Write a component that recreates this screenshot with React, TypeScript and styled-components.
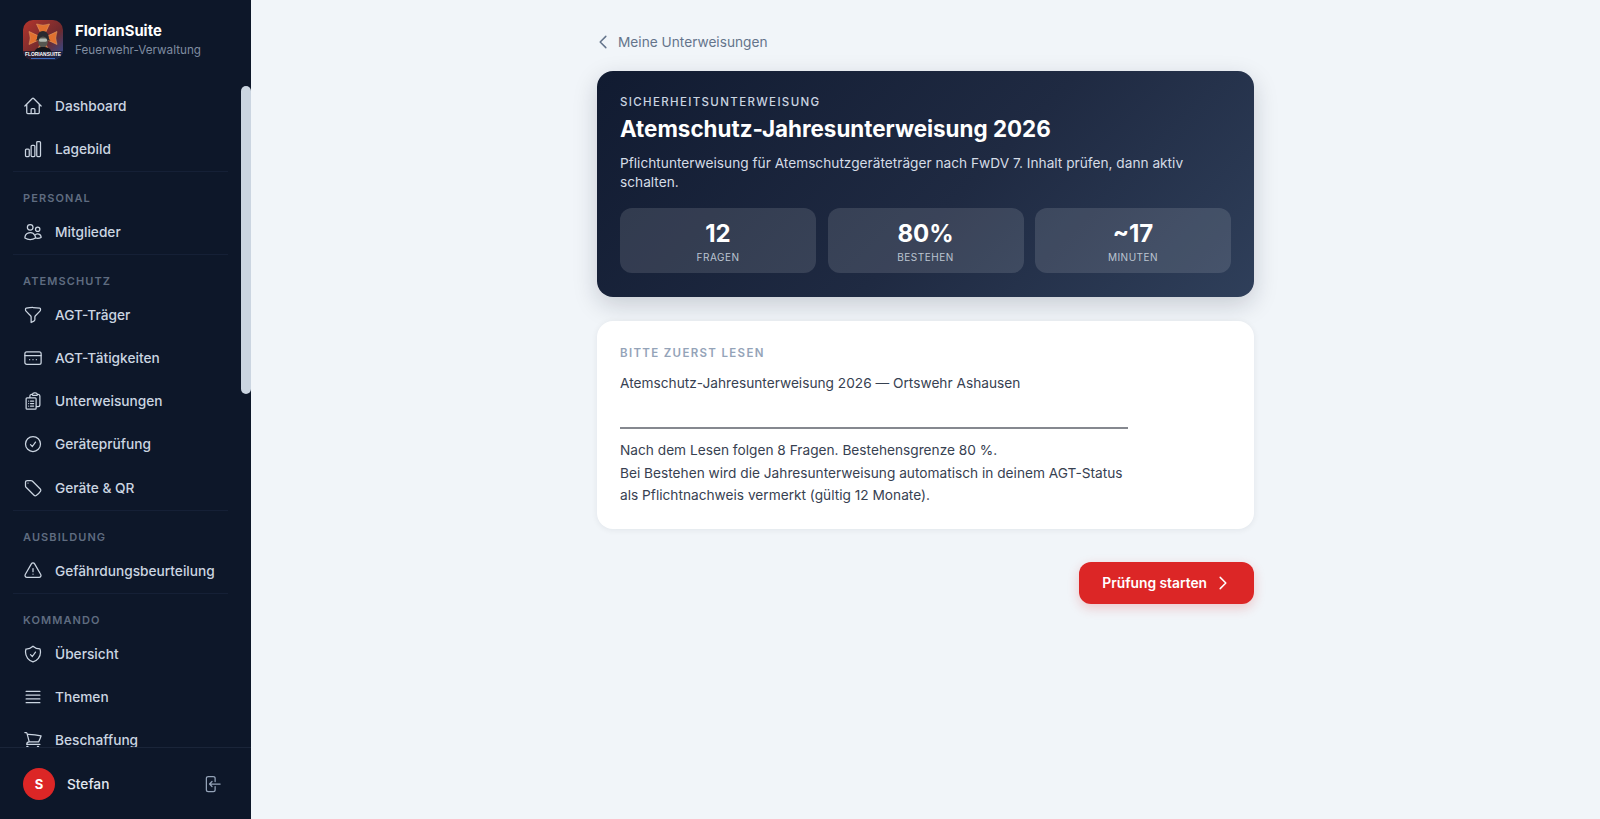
import React from "react";
import styled, { createGlobalStyle } from "styled-components";
import {
  HiOutlineArrowLeftEndOnRectangle,
  HiOutlineBars4,
  HiOutlineChartBar,
  HiOutlineCheckCircle,
  HiOutlineChevronLeft,
  HiOutlineChevronRight,
  HiOutlineClipboardDocumentList,
  HiOutlineExclamationTriangle,
  HiOutlineFunnel,
  HiOutlineHome,
  HiOutlineShieldCheck,
  HiOutlineShoppingCart,
  HiOutlineTag,
  HiOutlineUsers,
} from "react-icons/hi2";

const GlobalStyle = createGlobalStyle`
  html, body, #root {
    margin: 0;
    height: 100%;
  }
  body {
    font-family: Inter, "Noto Sans", "Liberation Sans", sans-serif;
    background: #f1f5f9;
    overflow: hidden;
  }
  * {
    box-sizing: border-box;
  }
`;

const Shell = styled.div`
  display: flex;
  height: 100vh;
`;

const Sidebar = styled.aside`
  position: relative;
  width: 251px;
  flex-shrink: 0;
  display: flex;
  flex-direction: column;
  background: #0d1729;
`;

const Brand = styled.div`
  display: flex;
  align-items: center;
  gap: 12px;
  height: 80px;
  padding: 0 23px 1px;
  flex-shrink: 0;
`;

const BrandText = styled.div`
  display: flex;
  flex-direction: column;
  gap: 2px;
`;

const BrandName = styled.div`
  font-size: 14.8px;
  font-weight: 700;
  line-height: 19px;
  color: #ffffff;
`;

const BrandSub = styled.div`
  font-size: 11.7px;
  line-height: 15px;
  color: #7f8ca0;
`;

const Nav = styled.nav`
  flex: 1;
  min-height: 0;
  overflow: hidden;
  padding: 5px 23px 0 13px;
`;

const ScrollThumb = styled.div`
  position: absolute;
  top: 86px;
  right: 0;
  width: 10px;
  height: 308px;
  border-radius: 5px;
  background: #cbd5e1;
`;

const Group = styled.div`
  border-bottom: 1px solid #152036;
  margin-bottom: 19px;
`;

const GroupLabel = styled.div`
  padding-left: 10px;
  margin-bottom: 6px;
  font-size: 11px;
  line-height: 14px;
  font-weight: 600;
  letter-spacing: 1.1px;
  text-transform: uppercase;
  color: #5f6c80;
`;

const NavItem = styled.a`
  display: flex;
  align-items: center;
  gap: 12px;
  height: 41.15px;
  margin-bottom: 2px;
  padding-left: 10px;
  font-size: 13.7px;
  font-weight: 500;
  color: #cbd5e1;

  svg {
    flex-shrink: 0;
    font-size: 20px;
  }
`;

const SidebarFooter = styled.div`
  height: 72px;
  flex-shrink: 0;
  display: flex;
  align-items: center;
  padding: 0 29px 0 23px;
  gap: 12px;
  border-top: 1px solid #1a2539;
`;

const Avatar = styled.div`
  width: 32px;
  height: 32px;
  border-radius: 50%;
  background: #dc2626;
  color: #ffffff;
  display: flex;
  align-items: center;
  justify-content: center;
  font-size: 13px;
  font-weight: 700;
`;

const UserName = styled.div`
  flex: 1;
  font-size: 13.7px;
  font-weight: 500;
  color: #e2e8f0;
`;

const LogoutIcon = styled(HiOutlineArrowLeftEndOnRectangle)`
  font-size: 20px;
  color: #94a3b8;
`;

const Main = styled.main`
  flex: 1;
  min-width: 0;
  display: flex;
  justify-content: center;
  padding-top: 31px;
`;

const Column = styled.div`
  width: 657px;
  display: flex;
  flex-direction: column;
`;

const BackLink = styled.a`
  display: flex;
  align-items: center;
  gap: 6px;
  height: 22px;
  margin-bottom: 18px;
  font-size: 13.7px;
  color: #64748b;

  svg {
    margin-left: -3px;
    font-size: 18px;
    stroke-width: 2;
  }
`;

const Hero = styled.section`
  height: 226px;
  padding: 23px 23px 0;
  border-radius: 16px;
  background: linear-gradient(135deg, #111b31 0%, #1f2a42 55%, #2f3f5a 100%);
  box-shadow: 0 8px 24px rgba(15, 23, 42, 0.18);
  margin-bottom: 24px;
`;

const Eyebrow = styled.div`
  font-size: 11.5px;
  line-height: 16px;
  font-weight: 500;
  letter-spacing: 1.35px;
  text-transform: uppercase;
  color: #cbd5e1;
`;

const HeroTitle = styled.h1`
  margin: 4px 0 10px;
  font-size: 22.4px;
  line-height: 30px;
  font-weight: 700;
  color: #ffffff;
`;

const HeroText = styled.p`
  margin: 0 0 16px;
  font-size: 13.7px;
  line-height: 19.2px;
  color: #d5dce6;
`;

const Stats = styled.div`
  display: grid;
  grid-template-columns: repeat(3, 1fr);
  gap: 11.5px;
`;

const Stat = styled.div`
  height: 65px;
  border-radius: 12px;
  background: rgba(255, 255, 255, 0.12);
  display: flex;
  flex-direction: column;
  align-items: center;
  padding-top: 11px;
`;

const StatValue = styled.div`
  font-size: 24px;
  line-height: 30px;
  font-weight: 700;
  color: #ffffff;
`;

const StatLabel = styled.div`
  margin-top: 1px;
  font-size: 10px;
  line-height: 14px;
  letter-spacing: 0.5px;
  text-transform: uppercase;
  color: #bcc5d1;
`;

const ReadCard = styled.section`
  height: 208px;
  padding: 24px 23px 0;
  border-radius: 16px;
  background: #ffffff;
  box-shadow: 0 1px 6px rgba(15, 23, 42, 0.07);
  margin-bottom: 33px;
`;

const ReadLabel = styled.div`
  font-size: 11.5px;
  line-height: 16px;
  font-weight: 600;
  letter-spacing: 1.33px;
  text-transform: uppercase;
  color: #94a3b8;
  margin-bottom: 11px;
`;

const ReadBody = styled.div`
  max-width: 508px;
  font-size: 13.7px;
  line-height: 22.4px;
  color: #374151;
`;

const Rule = styled.hr`
  margin: 33px 0 10px;
  border: 0;
  border-top: 2px solid #85888f;
`;

const Actions = styled.div`
  display: flex;
  justify-content: flex-end;
`;

const StartButton = styled.button`
  display: flex;
  align-items: center;
  gap: 7px;
  height: 42px;
  padding: 0 22px 0 23px;
  border: 0;
  border-radius: 12px;
  background: #dc2626;
  color: #ffffff;
  font-family: inherit;
  font-size: 13.8px;
  font-weight: 600;
  box-shadow: 0 4px 12px rgba(220, 38, 38, 0.22);

  svg {
    font-size: 18px;
    stroke-width: 2;
  }
`;

function Logo() {
  const arms = [0, 90, 180, 270];
  return (
    <svg width="40" height="40" viewBox="0 0 40 40" style={{ flexShrink: 0 }}>
      <defs>
        <linearGradient id="logoBg" x1="0" y1="0" x2="1" y2="1">
          <stop offset="0" stopColor="#b5352c" />
          <stop offset="0.6" stopColor="#6e2a2e" />
          <stop offset="1" stopColor="#2450a0" />
        </linearGradient>
        <clipPath id="logoClip">
          <rect width="40" height="40" rx="10" />
        </clipPath>
      </defs>
      <g clipPath="url(#logoClip)">
        <rect width="40" height="40" fill="url(#logoBg)" />
        {arms.map((angle) => (
          <path
            key={angle}
            d="M20 18 L13.5 4 Q20 6.500 26.500 4 Z"
            fill="#e0702f"
            stroke="#f0b070"
            strokeWidth="0.5"
            transform={`rotate(${angle} 20 18)`}
          />
        ))}
        <path d="M14 19c0-5 2.500-8 6-8s6 3 6 8l1.500 1.500h-15z" fill="#2a2a2f" />
        <ellipse cx="20" cy="22" rx="4.800" ry="5.500" fill="#56564f" />
        <rect x="16" y="18.500" width="8" height="3.200" rx="1.500" fill="#b4bbb3" />
        <path d="M11 33c1-4.500 4.500-6 9-6s8 1.500 9 6z" fill="#15161b" />
        <rect y="31" width="40" height="9" fill="#121830" opacity="0.75" />
        <path d="M8 38.500h24" stroke="#3f7fe0" strokeWidth="0.8" />
        <text
          x="20"
          y="35.500"
          textAnchor="middle"
          fontFamily="Liberation Sans, sans-serif"
          fontSize="4.900"
          fontWeight="700"
          fill="#ffffff"
        >
          FLORIANSUITE
        </text>
      </g>
    </svg>
  );
}

function ActivityIcon() {
  return (
    <svg
      width="20"
      height="20"
      viewBox="0 0 24 24"
      fill="none"
      stroke="currentColor"
      strokeWidth="1.5"
      strokeLinecap="round"
    >
      <rect x="2.25" y="4.5" width="19.5" height="15" rx="2.25" />
      <path d="M2.25 9h19.5" />
      <path d="M8 14h.01M12 14h.01M16 14h.01" />
    </svg>
  );
}

type NavEntry = { label: string; icon: React.ReactNode };
type NavGroup = { title?: string; items: NavEntry[] };

const groups: NavGroup[] = [
  {
    items: [
      { label: "Dashboard", icon: <HiOutlineHome /> },
      { label: "Lagebild", icon: <HiOutlineChartBar /> },
    ],
  },
  {
    title: "Personal",
    items: [{ label: "Mitglieder", icon: <HiOutlineUsers /> }],
  },
  {
    title: "Atemschutz",
    items: [
      { label: "AGT-Träger", icon: <HiOutlineFunnel /> },
      { label: "AGT-Tätigkeiten", icon: <ActivityIcon /> },
      { label: "Unterweisungen", icon: <HiOutlineClipboardDocumentList /> },
      { label: "Geräteprüfung", icon: <HiOutlineCheckCircle /> },
      { label: "Geräte & QR", icon: <HiOutlineTag /> },
    ],
  },
  {
    title: "Ausbildung",
    items: [
      { label: "Gefährdungsbeurteilung", icon: <HiOutlineExclamationTriangle /> },
    ],
  },
  {
    title: "Kommando",
    items: [
      { label: "Übersicht", icon: <HiOutlineShieldCheck /> },
      { label: "Themen", icon: <HiOutlineBars4 /> },
      { label: "Beschaffung", icon: <HiOutlineShoppingCart /> },
    ],
  },
];

const stats = [
  { value: "12", label: "Fragen" },
  { value: "80%", label: "Bestehen" },
  { value: "~17", label: "Minuten" },
];

export default function App() {
  return (
    <Shell>
      <GlobalStyle />
      <Sidebar>
        <Brand>
          <Logo />
          <BrandText>
            <BrandName>FlorianSuite</BrandName>
            <BrandSub>Feuerwehr-Verwaltung</BrandSub>
          </BrandText>
        </Brand>
        <Nav>
          {groups.map((group) => (
            <Group key={group.title ?? "start"}>
              {group.title && <GroupLabel>{group.title}</GroupLabel>}
              {group.items.map((item) => (
                <NavItem key={item.label}>
                  {item.icon}
                  {item.label}
                </NavItem>
              ))}
            </Group>
          ))}
        </Nav>
        <ScrollThumb />
        <SidebarFooter>
          <Avatar>S</Avatar>
          <UserName>Stefan</UserName>
          <LogoutIcon />
        </SidebarFooter>
      </Sidebar>
      <Main>
        <Column>
          <BackLink>
            <HiOutlineChevronLeft />
            Meine Unterweisungen
          </BackLink>
          <Hero>
            <Eyebrow>Sicherheitsunterweisung</Eyebrow>
            <HeroTitle>Atemschutz-Jahresunterweisung 2026</HeroTitle>
            <HeroText>
              Pflichtunterweisung für Atemschutzgeräteträger nach FwDV 7. Inhalt
              prüfen, dann aktiv schalten.
            </HeroText>
            <Stats>
              {stats.map((stat) => (
                <Stat key={stat.label}>
                  <StatValue>{stat.value}</StatValue>
                  <StatLabel>{stat.label}</StatLabel>
                </Stat>
              ))}
            </Stats>
          </Hero>
          <ReadCard>
            <ReadLabel>Bitte zuerst lesen</ReadLabel>
            <ReadBody>
              Atemschutz-Jahresunterweisung 2026 — Ortswehr Ashausen
              <Rule />
              Nach dem Lesen folgen 8 Fragen. Bestehensgrenze 80 %.
              <br />
              Bei Bestehen wird die Jahresunterweisung automatisch in deinem
              AGT-Status
              <br />
              als Pflichtnachweis vermerkt (gültig 12 Monate).
            </ReadBody>
          </ReadCard>
          <Actions>
            <StartButton>
              Prüfung starten
              <HiOutlineChevronRight />
            </StartButton>
          </Actions>
        </Column>
      </Main>
    </Shell>
  );
}
